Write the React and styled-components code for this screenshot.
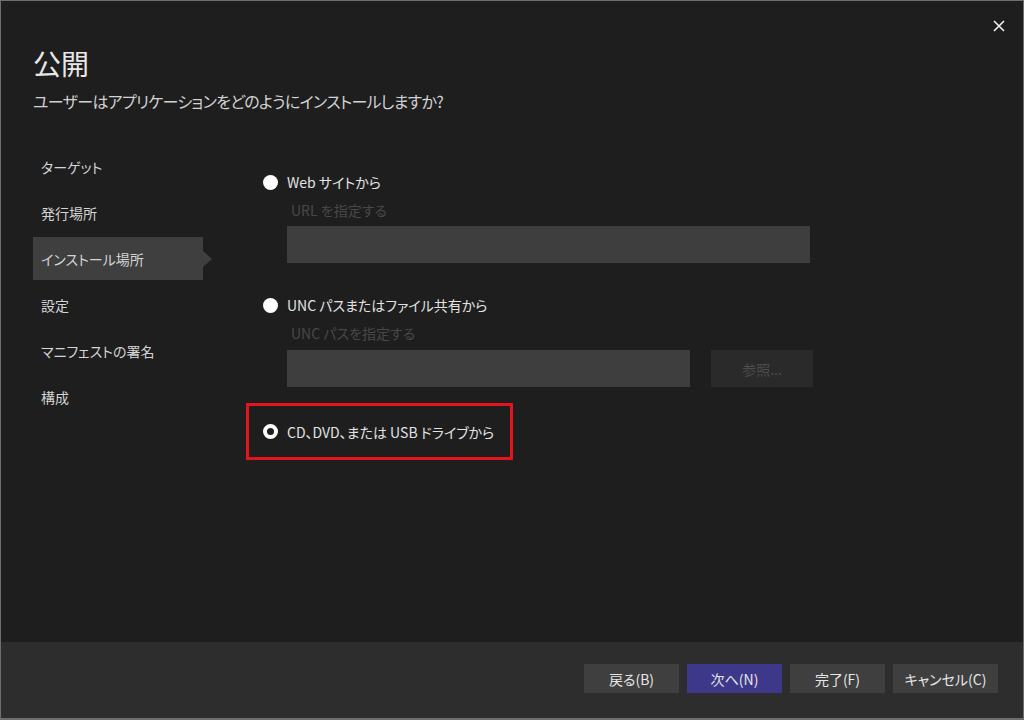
import React from "react";
import styled, { createGlobalStyle } from "styled-components";

const Global = createGlobalStyle`
  html, body { margin: 0; padding: 0; background: #1e1e1e; }
  body { font-family: "Noto Sans", "Noto Sans CJK JP", sans-serif; }
  * { box-sizing: border-box; }
`;

const Window = styled.div`
  width: 1024px;
  height: 720px;
  display: flex;
  flex-direction: column;
  background: #1e1e1e;
  border: 1px solid #6e6e6e;
  border-bottom-width: 2px;
  font-family: "Noto Sans CJK JP", sans-serif;
  font-feature-settings: "palt";
  color: #dcdcdc;
`;

const TopBar = styled.div`
  height: 42px;
  display: flex;
  justify-content: flex-end;
  align-items: flex-start;
  padding: 18px 17px 0 0;
`;

const CloseButton = styled.button`
  width: 14px;
  height: 14px;
  padding: 0;
  border: none;
  background: transparent;
  display: flex;
  align-items: center;
  justify-content: center;
  cursor: pointer;
`;

const Header = styled.div`
  padding: 0 0 0 32px;
`;

const Title = styled.h1`
  margin: 0;
  font-size: 28px;
  line-height: 40px;
  font-weight: 400;
  color: #e8e8e8;
`;

const Subtitle = styled.p`
  margin: 5px 0 0;
  font-size: 16px;
  line-height: 26px;
  letter-spacing: -0.7px;
  color: #d2d2d2;
`;

const Body = styled.div`
  flex: 1;
  display: flex;
  padding: 31px 0 0 32px;
  gap: 43px;
`;

const Nav = styled.nav`
  width: 170px;
  display: flex;
  flex-direction: column;
  gap: 3px;
`;

const NavItem = styled.div`
  position: relative;
  height: 43px;
  display: flex;
  align-items: center;
  padding-left: 8px;
  font-size: 14px;
  color: #d4d4d4;
  background: ${(p) => (p.$active ? "#3f3f3f" : "transparent")};

  &::after {
    content: "";
    display: ${(p) => (p.$active ? "block" : "none")};
    position: absolute;
    right: -9px;
    top: 50%;
    transform: translateY(-50%);
    border-left: 9px solid #3f3f3f;
    border-top: 8px solid transparent;
    border-bottom: 8px solid transparent;
  }
`;

const Panel = styled.div`
  display: flex;
  flex-direction: column;
  padding-top: 25px;
`;

const OptionRow = styled.label`
  display: flex;
  align-items: center;
  gap: 9px;
  width: ${(p) => (p.$highlight ? "267px" : "auto")};
  height: ${(p) => (p.$highlight ? "57px" : "24px")};
  margin-top: ${(p) => p.$mt || 0}px;
  padding-left: ${(p) => (p.$highlight ? 14 : 17)}px;
  border: ${(p) => (p.$highlight ? "3px solid #e3141c" : "none")};
  font-size: 14px;
  color: #e2e2e2;
  cursor: pointer;
`;

const Radio = styled.span`
  width: 15px;
  height: 15px;
  border-radius: 50%;
  flex: none;
  background: ${(p) => (p.$checked ? "#1e1e1e" : "#ffffff")};
  border: ${(p) => (p.$checked ? "4px solid #ffffff" : "none")};
`;

const Sub = styled.div`
  padding-left: 41px;
  display: flex;
  flex-direction: column;
`;

const Hint = styled.div`
  margin-top: 6px;
  font-size: 14px;
  line-height: 20px;
  padding-left: 4px;
  color: #484848;
`;

const FieldRow = styled.div`
  display: flex;
  gap: 21px;
  margin-top: ${(p) => p.$mt || 6}px;
`;

const TextBox = styled.div`
  width: ${(p) => p.$w}px;
  height: 37px;
  background: #3e3e3e;
`;

const BrowseButton = styled.div`
  width: 102px;
  height: 37px;
  background: #2a2a2a;
  color: #4c4c4c;
  font-size: 14px;
  display: flex;
  align-items: center;
  justify-content: center;
`;

const Footer = styled.div`
  height: 76px;
  background: #2d2d2d;
  display: flex;
  justify-content: flex-end;
  align-items: flex-start;
  gap: 8px;
  padding: 22px 25px 0 0;
`;

const FooterButton = styled.button`
  width: ${(p) => p.$w || 95}px;
  height: 29px;
  border: none;
  padding: 0;
  font-family: inherit;
  font-feature-settings: "palt";
  font-size: 14px;
  color: #e6e6e6;
  background: ${(p) => (p.$primary ? "#3e388a" : "#3f3f3f")};
  cursor: pointer;
`;

const navItems = ["ターゲット", "発行場所", "インストール場所", "設定", "マニフェストの署名", "構成"];

export default function App() {
  return (
    <>
      <Global />
      <Window>
        <TopBar>
          <CloseButton aria-label="閉じる">
            <svg width="12" height="12" viewBox="0 0 12 12">
              <path d="M1 1 L11 11 M11 1 L1 11" stroke="#f0f0f0" strokeWidth="1.6" />
            </svg>
          </CloseButton>
        </TopBar>
        <Header>
          <Title>公開</Title>
          <Subtitle>ユーザーはアプリケーションをどのようにインストールしますか?</Subtitle>
        </Header>
        <Body>
          <Nav>
            {navItems.map((t) => (
              <NavItem key={t} $active={t === "インストール場所"}>
                {t}
              </NavItem>
            ))}
          </Nav>
          <Panel>
            <OptionRow>
              <Radio />
              Web サイトから
            </OptionRow>
            <Sub>
              <Hint>URL を指定する</Hint>
              <FieldRow>
                <TextBox $w={523} />
              </FieldRow>
            </Sub>
            <OptionRow $mt={30}>
              <Radio />
              UNC パスまたはファイル共有から
            </OptionRow>
            <Sub>
              <Hint>UNC パスを指定する</Hint>
              <FieldRow $mt={7}>
                <TextBox $w={403} />
                <BrowseButton>参照...</BrowseButton>
              </FieldRow>
            </Sub>
            <OptionRow $highlight $mt={16}>
              <Radio $checked />
              CD、DVD、または USB ドライブから
            </OptionRow>
          </Panel>
        </Body>
        <Footer>
          <FooterButton>戻る(B)</FooterButton>
          <FooterButton $primary>次へ(N)</FooterButton>
          <FooterButton>完了(F)</FooterButton>
          <FooterButton $w={105}>キャンセル(C)</FooterButton>
        </Footer>
      </Window>
    </>
  );
}
